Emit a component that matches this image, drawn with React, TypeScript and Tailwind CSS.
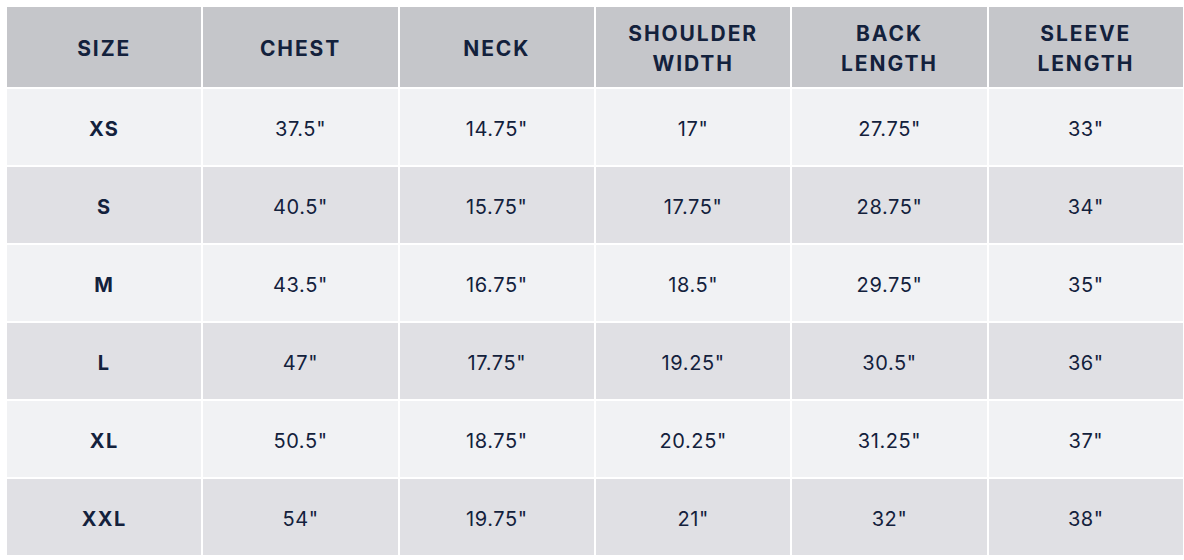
const headers = [['SIZE'], ['CHEST'], ['NECK'], ['SHOULDER', 'WIDTH'], ['BACK', 'LENGTH'], ['SLEEVE', 'LENGTH']];

const rows = [
  ['XS', '37.5"', '14.75"', '17"', '27.75"', '33"'],
  ['S', '40.5"', '15.75"', '17.75"', '28.75"', '34"'],
  ['M', '43.5"', '16.75"', '18.5"', '29.75"', '35"'],
  ['L', '47"', '17.75"', '19.25"', '30.5"', '36"'],
  ['XL', '50.5"', '18.75"', '20.25"', '31.25"', '37"'],
  ['XXL', '54"', '19.75"', '21"', '32"', '38"'],
];

export default function App() {
  return (
    <div className="w-[1184px] h-[560px] bg-white p-[7px] pr-[1px] pb-[5px] text-[#13213c]" style={{ fontFamily: 'Inter, "Noto Sans", sans-serif' }}>
      <div className="grid grid-cols-6 gap-[2px] grid-rows-[80px_repeat(6,76px)]">
        {headers.map((h, i) => (
          <div key={i} className="bg-[#c5c6ca] flex flex-col items-center justify-center pt-[3px] text-[21px] leading-[30px] font-bold tracking-[0.09em]">
            {h.map((line) => (
              <span key={line}>{line}</span>
            ))}
          </div>
        ))}
        {rows.map((r, ri) =>
          r.map((cell, ci) => (
            <div
              key={ri + '-' + ci}
              className={`${ri % 2 === 0 ? 'bg-[#f1f2f4]' : 'bg-[#e0e0e4]'} flex items-center justify-center pt-[3px] text-[20px] ${ci === 0 ? 'font-bold tracking-[0.07em]' : 'tracking-[0.03em]'}`}
            >
              {cell}
            </div>
          ))
        )}
      </div>
    </div>
  );
}
